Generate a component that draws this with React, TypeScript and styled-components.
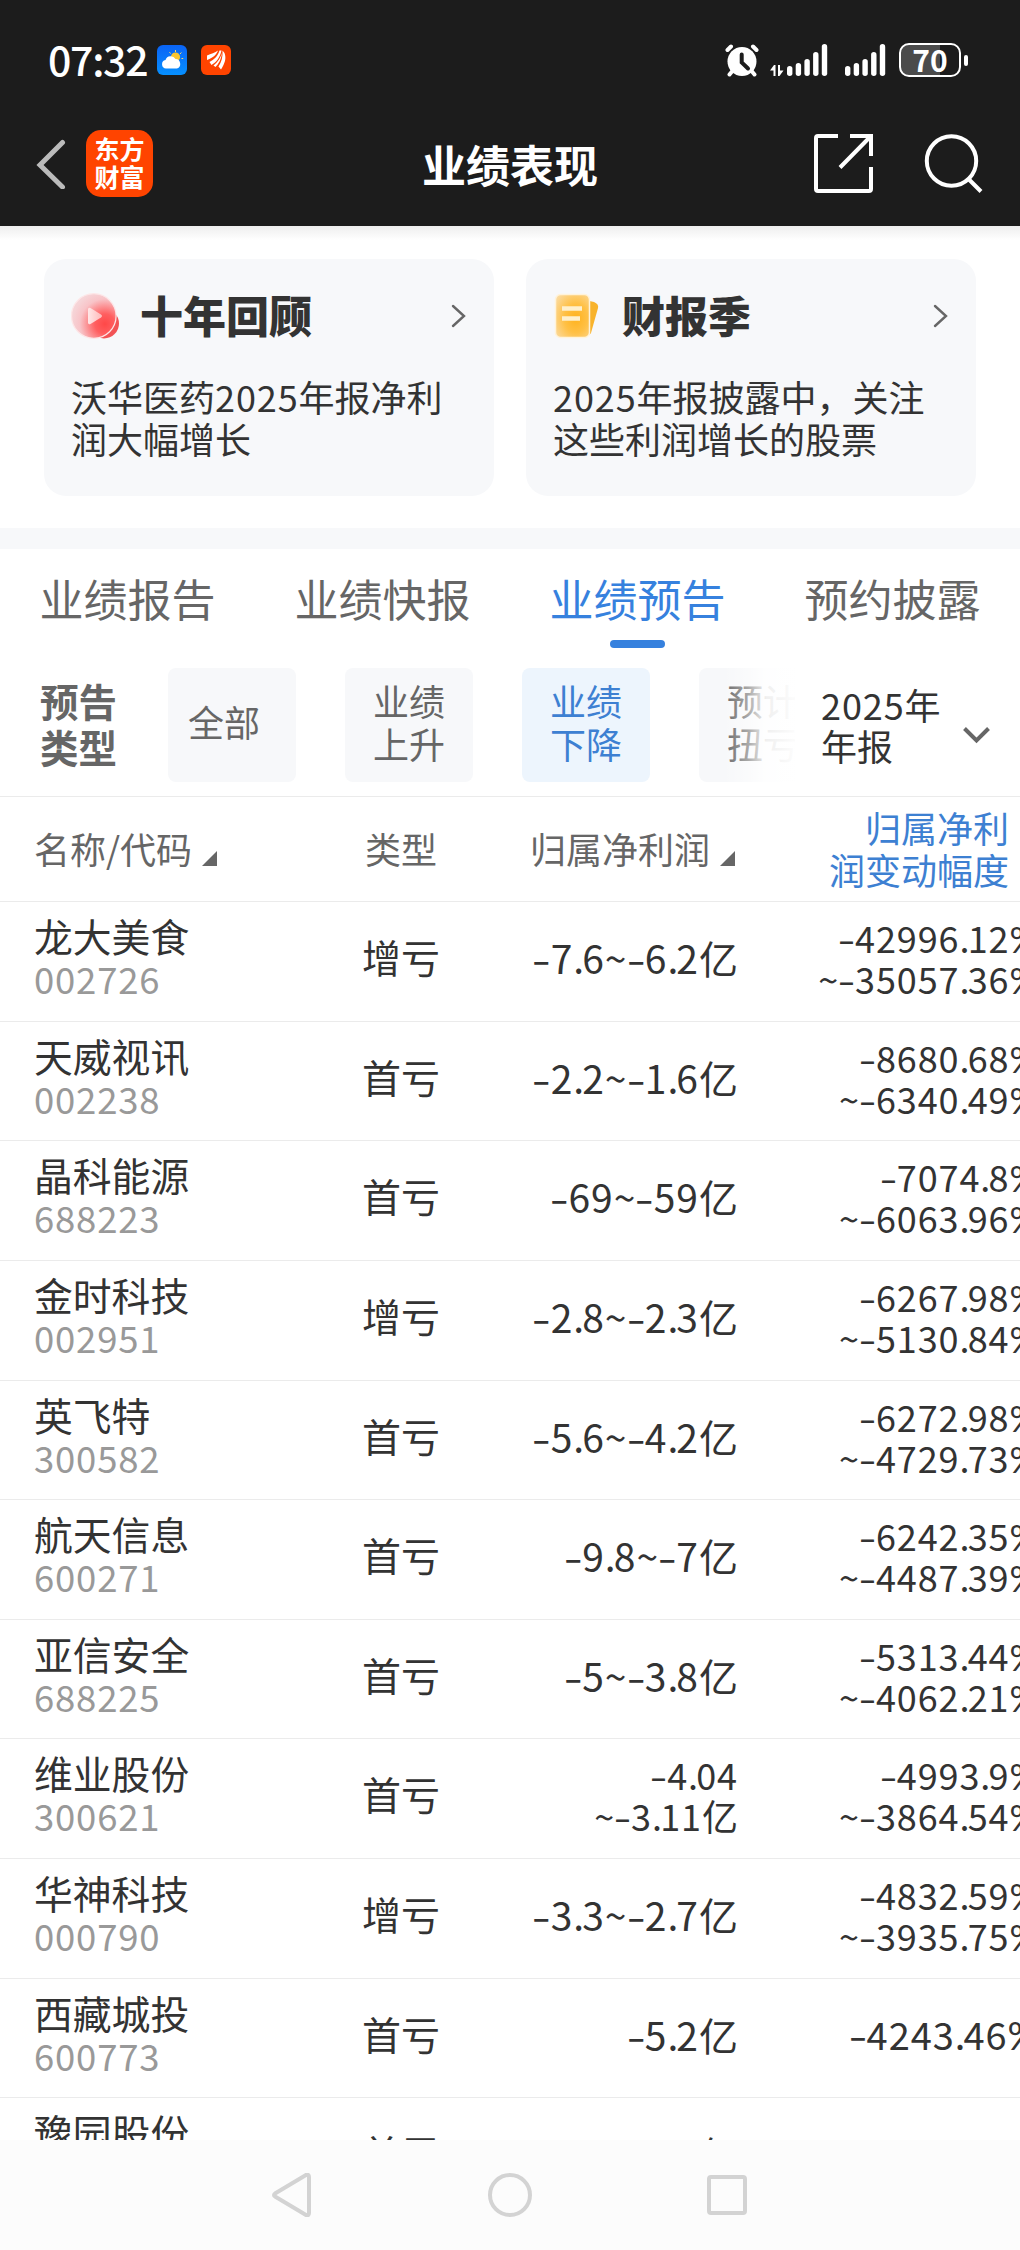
import React from "react";
import styled, { createGlobalStyle } from "styled-components";

const Global = createGlobalStyle`
  * { box-sizing: border-box; }
  body {
    margin: 0;
    background: #fff;
    font-family: "Noto Sans CJK SC", sans-serif;
    color: #333;
  }
`;

const Screen = styled.div`
  width: 1020px;
  height: 2250px;
  display: flex;
  flex-direction: column;
  overflow: hidden;
  background: #fff;
`;

/* ---------- status bar and title bar ---------- */

const Top = styled.header`
  flex: none;
  height: 226px;
  background: #1c1c1c;
  color: #fff;
`;

const StatusBar = styled.div`
  display: flex;
  align-items: center;
  height: 120px;
  padding: 0 52px 0 48px;
`;

const Clock = styled.span`
  width: 109px;
  font-size: 41px;
  font-weight: 500;
  letter-spacing: -1.3px;
  line-height: 60px;
  padding-bottom: 4px;
  white-space: nowrap;
`;

const AppBadge = styled.svg`
  width: 30px;
  height: 30px;
  margin-right: 14px;
`;

const StatusIcons = styled.div`
  display: flex;
  align-items: center;
  margin-left: auto;
`;

const SignalGroup = styled.div`
  display: flex;
  gap: 17px;
  margin-left: 11px;
`;

const Battery = styled.div`
  display: flex;
  justify-content: center;
  width: 62px;
  height: 34px;
  margin: 0 3px 0 12px;
  border: 2px solid #fff;
  border-radius: 10px;
  background: linear-gradient(90deg, #4b4b4b 68%, #1c1c1c 68%);
  font-size: 30px;
  font-weight: 600;
  line-height: 28px;
`;

const BatteryTip = styled.span`
  width: 4px;
  height: 11px;
  border-radius: 2px;
  background: #fff;
`;

const TitleBar = styled.div`
  display: grid;
  grid-template-columns: 1fr auto 1fr;
  align-items: center;
  height: 87px;
  padding: 0 36px;
`;

const TitleSide = styled.div<{ $end?: boolean }>`
  display: flex;
  align-items: center;
  justify-content: ${(p) => (p.$end ? "flex-end" : "flex-start")};
  gap: ${(p) => (p.$end ? 50 : 20)}px;
`;

const Logo = styled.div`
  width: 67px;
  height: 67px;
  padding-top: 4px;
  border-radius: 15px;
  background: #ff4400;
  font-size: 25px;
  font-weight: 700;
  line-height: 28px;
  text-align: center;
`;

const Title = styled.h1`
  margin: 0;
  font-size: 44px;
  font-weight: 700;
  line-height: 60px;
`;

/* ---------- promo cards ---------- */

const Promos = styled.section`
  flex: none;
  display: grid;
  grid-template-columns: 450px 450px;
  gap: 32px;
  height: 302px;
  padding: 33px 44px 0;
  background: linear-gradient(#eeeeee, #fff 14px);
`;

const Card = styled.article`
  height: 237px;
  padding: 28px 28px 28px 27px;
  border-radius: 22px;
  background: #f7f8fa;
`;

const CardHead = styled.div`
  display: flex;
  align-items: center;
  height: 58px;
`;

const CardTitle = styled.h2`
  flex: 1;
  margin: 0 0 4px 20px;
  font-size: 43px;
  font-weight: 900;
  line-height: 54px;
`;

const CardText = styled.p`
  margin: 30px 0 0;
  font-size: 36px;
  line-height: 42px;
  white-space: nowrap;
`;

const Divider = styled.div`
  flex: none;
  height: 21px;
  background: #f7f8fa;
`;

/* ---------- tabs ---------- */

const Tabs = styled.nav`
  flex: none;
  display: grid;
  grid-template-columns: repeat(4, 1fr);
  height: 119px;
`;

const Tab = styled.div<{ $active?: boolean }>`
  display: flex;
  flex-direction: column;
  align-items: center;
  padding-top: 18px;
  font-size: 44px;
  line-height: 62px;
  color: ${(p) => (p.$active ? "#3681de" : "#666")};

  &::after {
    content: "";
    width: 55px;
    height: 8px;
    margin-top: 11px;
    border-radius: 4px;
    background: ${(p) => (p.$active ? "#3681de" : "transparent")};
  }
`;

/* ---------- filters ---------- */

const Filters = styled.section`
  flex: none;
  display: flex;
  height: 129px;
  padding-left: 40px;
  border-bottom: 1px solid #ebebeb;
`;

const FilterLabel = styled.div`
  width: 128px;
  padding-top: 9px;
  font-size: 38.5px;
  font-weight: 700;
  line-height: 46px;
  color: #666;
`;

const Chips = styled.div`
  position: relative;
  display: flex;
  gap: 49px;
  width: 627px;
  height: 114px;
  overflow: hidden;

  &::after {
    content: "";
    position: absolute;
    inset: 0 0 0 auto;
    width: 72px;
    background: linear-gradient(90deg, #fff0, #ffffff70 35%, #ffffffe6 60%, #fffffffa);
  }
`;

const Chip = styled.div<{ $active?: boolean; $single?: boolean }>`
  flex: none;
  width: 128px;
  height: 114px;
  padding: ${(p) => (p.$single ? "32px 0 0 20px" : "11px 0 0")};
  border-radius: 8px;
  background: ${(p) => (p.$active ? "#edf5fd" : "#f7f8fa")};
  color: ${(p) => (p.$active ? "#3d80d2" : "#666")};
  font-size: 36px;
  line-height: 43px;
  text-align: ${(p) => (p.$single ? "left" : "center")};
`;

const Period = styled.div`
  display: flex;
  padding: 16px 0 0 26px;
  font-size: 36px;
  line-height: 41px;
`;

const PeriodText = styled.span`
  width: 142px;
`;

/* ---------- table ---------- */

const columns = "340px 122px 276px 306px";

const Table = styled.section`
  flex: 1;
  min-height: 0;
  overflow: hidden;
`;

const HeadRow = styled.div`
  display: grid;
  grid-template-columns: ${columns};
  align-items: center;
  height: 105px;
  padding-bottom: 2px;
  border-bottom: 1px solid #ebebeb;
  color: #666;
  font-size: 36px;
  line-height: 42px;
`;

const HeadCell = styled.div<{ $align?: "center" | "right" }>`
  display: flex;
  justify-content: ${(p) =>
    p.$align === "center" ? "center" : p.$align === "right" ? "flex-end" : "flex-start"};
  padding: ${(p) => (p.$align === "right" ? "0 3px 0 0" : p.$align ? "0" : "0 0 0 34px")};
`;

const SortMark = styled.svg`
  width: 15px;
  height: 15px;
  margin: 24px 0 0 10px;
`;

const ActiveHead = styled.div`
  padding-right: 35px;
  color: #3d80d2;
  text-align: right;
`;

const Row = styled.div`
  display: grid;
  grid-template-columns: ${columns};
  height: 119.65px;
  border-bottom: 1px solid #ebebeb;
`;

const NameCell = styled.div`
  padding: 11px 0 0 34px;
`;

const Name = styled.div`
  font-size: 38.8px;
  line-height: 44px;
`;

const Code = styled.div`
  font-size: 36.5px;
  line-height: 44px;
  letter-spacing: 0.8px;
  color: #999;
`;

const TypeCell = styled.div`
  padding-top: 27px;
  font-size: 39px;
  line-height: 54px;
  text-align: center;
`;

const ValueCell = styled.div<{ $lines: number; $size?: number }>`
  display: flex;
  flex-direction: column;
  align-items: flex-end;
  padding-top: ${(p) => (p.$lines > 1 ? 15 : 28)}px;
  font-size: ${(p) => (p.$lines > 1 ? 36 : p.$size ?? 39)}px;
  line-height: ${(p) => (p.$lines > 1 ? 41 : 54)}px;
  white-space: nowrap;
`;

const Digits = styled.span`
  letter-spacing: 0.025em;
`;

const Dot = styled.span`
  letter-spacing: -0.05em;
`;

const Dash = styled.span`
  display: inline-block;
  width: 0.47em;
  text-align: center;
  transform: scaleX(1.4);
`;

const Percent = styled.span`
  display: inline-block;
  width: 0.96em;
  font-family: Lato, "Noto Sans CJK SC", sans-serif;
  line-height: 1;
`;

/* ---------- system navigation ---------- */

const SystemNav = styled.footer`
  flex: none;
  display: flex;
  justify-content: center;
  align-items: center;
  gap: 173px;
  height: 110px;
  background: #fcfcfc;
`;

const NavIcon = styled.svg`
  width: 44px;
  height: 44px;
  fill: none;
  stroke: #d3d3d3;
  stroke-width: 4;
  stroke-linejoin: round;
`;

type Stock = { name: string; code: string; type: string; profit: string[]; change: string[] };

const stocks: Stock[] = [
  { name: "龙大美食", code: "002726", type: "增亏", profit: ["-7.6~-6.2亿"], change: ["-42996.12%", "~-35057.36%"] },
  { name: "天威视讯", code: "002238", type: "首亏", profit: ["-2.2~-1.6亿"], change: ["-8680.68%", "~-6340.49%"] },
  { name: "晶科能源", code: "688223", type: "首亏", profit: ["-69~-59亿"], change: ["-7074.8%", "~-6063.96%"] },
  { name: "金时科技", code: "002951", type: "增亏", profit: ["-2.8~-2.3亿"], change: ["-6267.98%", "~-5130.84%"] },
  { name: "英飞特", code: "300582", type: "首亏", profit: ["-5.6~-4.2亿"], change: ["-6272.98%", "~-4729.73%"] },
  { name: "航天信息", code: "600271", type: "首亏", profit: ["-9.8~-7亿"], change: ["-6242.35%", "~-4487.39%"] },
  { name: "亚信安全", code: "688225", type: "首亏", profit: ["-5~-3.8亿"], change: ["-5313.44%", "~-4062.21%"] },
  { name: "维业股份", code: "300621", type: "首亏", profit: ["-4.04", "~-3.11亿"], change: ["-4993.9%", "~-3864.54%"] },
  { name: "华神科技", code: "000790", type: "增亏", profit: ["-3.3~-2.7亿"], change: ["-4832.59%", "~-3935.75%"] },
  { name: "西藏城投", code: "600773", type: "首亏", profit: ["-5.2亿"], change: ["-4243.46%"] },
  { name: "豫园股份", code: "600655", type: "首亏", profit: ["-48亿"], change: ["-3926.1%"] },
];

function Amount({ text }: { text: string }) {
  const parts = text.split(/([-.%]|\d+)/).filter(Boolean);
  return (
    <div>
      {parts.map((part, i) => {
        if (part === "-") return <Dash key={i}>-</Dash>;
        if (part === ".") return <Dot key={i}>.</Dot>;
        if (part === "%") return <Percent key={i}>%</Percent>;
        return /\d/.test(part) ? <Digits key={i}>{part}</Digits> : part;
      })}
    </div>
  );
}

function Sort() {
  return (
    <SortMark viewBox="0 0 15 15">
      <path d="M15 0V15H0Z" fill="#666" />
    </SortMark>
  );
}

function WeatherBadge() {
  return (
    <AppBadge viewBox="0 0 30 30">
      <defs>
        <linearGradient id="sky" x2="0" y2="1">
          <stop stopColor="#0a63f5" />
          <stop offset="1" stopColor="#0690ff" />
        </linearGradient>
      </defs>
      <rect width="30" height="30" rx="6" fill="url(#sky)" />
      <path d="M18.5 7V5M13.5 8.5l-1-1.3M23 9l1.4-1.5M24.5 13.5h1.7" stroke="#f7d76a" strokeWidth="1" />
      <circle cx="18.5" cy="12" r="4.6" fill="#fcc62d" />
      <path d="M9 23.5a4.3 4.3 0 0 1-.5-8.5a5.5 5.5 0 0 1 10-1a4.9 4.9 0 0 1 1.5 9.5Z" fill="#fff" />
    </AppBadge>
  );
}

function BrandBadge() {
  return (
    <AppBadge viewBox="0 0 30 30">
      <rect width="30" height="30" rx="6" fill="#ff4400" />
      <path d="M6 10.5C10 9 14 7.5 17 5.5C15.5 10 11.5 13 6 15Z" fill="#fff" />
      <path d="M18.5 5.5L20.5 5.5C19 12.5 15.5 17 10.5 20L8.5 17C13 14.5 17 11 18.5 5.5Z" fill="#fff" />
      <path d="M21.5 5.5L23.5 8C25.5 13.5 24 18 20 24.5L17.5 21.5C20.5 17 22 12 21.5 5.5Z" fill="#fff" />
      <path d="M20.8 8C20.5 14 17.5 19 14.5 22L12.5 20.5C17 17 19.5 13 20.8 8Z" fill="#fff" />
    </AppBadge>
  );
}

function AlarmIcon() {
  return (
    <svg width="34" height="34" viewBox="0 0 34 34" fill="none" strokeLinecap="round">
      <circle cx="17" cy="18.5" r="14.5" fill="#fff" />
      <path d="M2.5 7L6 3.5M31.5 7L28 3.5M7 28.5L4.5 31.5M27 28.5L29.5 31.5" stroke="#fff" strokeWidth="4" />
      <path d="M16.7 11.5V19.5L23 25.5" stroke="#1c1c1c" strokeWidth="4" />
    </svg>
  );
}

function Signal({ data }: { data?: boolean }) {
  const heights = [10, 13, 17, 24, 32];
  return (
    <svg width={data ? 58 : 42} height="34" viewBox={data ? "-17 0 58 34" : "0 0 42 34"}>
      {heights.map((h, i) => (
        <rect key={h} x={i * 8.7} y={33 - h} width="5.4" height={h} rx="2.7" fill="#fff" />
      ))}
      {data && (
        <path d="M-17 27.5L-13 22H-11.5V33H-13.5V27.5ZM-9 22H-7V27.5H-3.500L-7.5 33H-9Z" fill="#fff" />
      )}
    </svg>
  );
}

function PlayIcon() {
  return (
    <svg width="49" height="47" viewBox="0 0 49 47">
      <defs>
        <radialGradient id="disc" cx="0.75" cy="0.68" r="0.75">
          <stop stopColor="#ff4848" />
          <stop offset="0.3" stopColor="#ff5f60" />
          <stop offset="0.75" stopColor="#f8c4c8" />
          <stop offset="1" stopColor="#f6d4d7" />
        </radialGradient>
        <linearGradient id="play">
          <stop stopColor="#ffe8e8" />
          <stop offset="1" stopColor="#ffb9b9" />
        </linearGradient>
      </defs>
      <circle cx="33" cy="30.5" r="15" fill="#f25355" />
      <circle cx="22.8" cy="23" r="22.3" fill="url(#disc)" stroke="#fde6e7" strokeWidth="1.2" />
      <path d="M17 16.5Q17 14 19.5 15L30 21.5Q32 23 30 24.5L19.5 31Q17 32 17 29.5Z" fill="url(#play)" />
    </svg>
  );
}

function ReportIcon() {
  return (
    <svg width="49" height="47" viewBox="0 0 49 47">
      <defs>
        <radialGradient id="sheet" cx="0.6" cy="0.55" r="0.75">
          <stop stopColor="#ffb21d" />
          <stop offset="0.45" stopColor="#ffc044" />
          <stop offset="1" stopColor="#fbdca4" />
        </radialGradient>
      </defs>
      <path d="M32 7L41 9Q46 11 45 15L38 40Q36 43 32 43Z" fill="#f8b32c" />
      <rect x="2.5" y="1.5" width="34" height="43" rx="5" fill="url(#sheet)" stroke="#fff3da" strokeWidth="1.5" />
      <path d="M9 15.5H29M9 25.5H27" stroke="#fff0cc" strokeWidth="4.5" />
    </svg>
  );
}

function CardArrow() {
  return (
    <svg width="15" height="24" viewBox="0 0 15 24" fill="none" stroke="#666" strokeWidth="2.4" strokeLinecap="round">
      <path d="M2 2L13 12L2 22" />
    </svg>
  );
}

export default function App() {
  return (
    <Screen>
      <Global />
      <Top>
        <StatusBar>
          <Clock>07:32</Clock>
          <WeatherBadge />
          <BrandBadge />
          <StatusIcons>
            <AlarmIcon />
            <SignalGroup>
              <Signal data />
              <Signal />
            </SignalGroup>
            <Battery>70</Battery>
            <BatteryTip />
          </StatusIcons>
        </StatusBar>
        <TitleBar>
          <TitleSide>
            <svg width="30" height="50" viewBox="0 0 30 50" fill="none" stroke="#bbb" strokeWidth="5" strokeLinecap="round">
              <path d="M26.5 3.5L4 26L26.5 48" />
            </svg>
            <Logo>
              东方
              <br />
              财富
            </Logo>
          </TitleSide>
          <Title>业绩表现</Title>
          <TitleSide $end>
            <svg width="59" height="59" viewBox="0 0 59 59" fill="none" stroke="#fff" strokeWidth="4">
              <path d="M24 2H4Q2 2 2 4V55Q2 57 4 57H55Q57 57 57 55V33M36 2H57V22M56 3L26 33.5" />
            </svg>
            <svg width="61" height="59" viewBox="0 0 61 59" fill="none" stroke="#fff" strokeWidth="4">
              <circle cx="28.5" cy="27" r="24.7" />
              <path d="M45.5 45L58 57.5" />
            </svg>
          </TitleSide>
        </TitleBar>
      </Top>

      <Promos>
        <Card>
          <CardHead>
            <PlayIcon />
            <CardTitle>十年回顾</CardTitle>
            <CardArrow />
          </CardHead>
          <CardText>
            沃华医药<Digits>2025</Digits>年报净利
            <br />
            润大幅增长
          </CardText>
        </Card>
        <Card>
          <CardHead>
            <ReportIcon />
            <CardTitle>财报季</CardTitle>
            <CardArrow />
          </CardHead>
          <CardText>
            <Digits>2025</Digits>年报披露中，关注
            <br />
            这些利润增长的股票
          </CardText>
        </Card>
      </Promos>
      <Divider />

      <Tabs>
        <Tab>业绩报告</Tab>
        <Tab>业绩快报</Tab>
        <Tab $active>业绩预告</Tab>
        <Tab>预约披露</Tab>
      </Tabs>

      <Filters>
        <FilterLabel>
          预告
          <br />
          类型
        </FilterLabel>
        <Chips>
          <Chip $single>全部</Chip>
          <Chip>
            业绩
            <br />
            上升
          </Chip>
          <Chip $active>
            业绩
            <br />
            下降
          </Chip>
          <Chip>
            预计
            <br />
            扭亏
          </Chip>
        </Chips>
        <Period>
          <PeriodText>
            <Digits>2025</Digits>年
            <br />
            年报
          </PeriodText>
          <svg width="27" height="61" viewBox="0 0 27 61" fill="none" stroke="#666" strokeWidth="4">
            <path d="M1.5 44.5L13.5 56.5L25.5 44.5" />
          </svg>
        </Period>
      </Filters>

      <Table>
        <HeadRow>
          <HeadCell>
            名称/代码
            <Sort />
          </HeadCell>
          <HeadCell $align="center">类型</HeadCell>
          <HeadCell $align="right">
            归属净利润
            <Sort />
          </HeadCell>
          <ActiveHead>
            归属净利
            <br />
            润变动幅度
          </ActiveHead>
        </HeadRow>
        {stocks.map((s) => (
          <Row key={s.code}>
            <NameCell>
              <Name>{s.name}</Name>
              <Code>{s.code}</Code>
            </NameCell>
            <TypeCell>{s.type}</TypeCell>
            <ValueCell $lines={s.profit.length}>
              {s.profit.map((t) => (
                <Amount key={t} text={t} />
              ))}
            </ValueCell>
            <ValueCell $lines={s.change.length} $size={38}>
              {s.change.map((t) => (
                <Amount key={t} text={t} />
              ))}
            </ValueCell>
          </Row>
        ))}
      </Table>

      <SystemNav>
        <NavIcon viewBox="0 0 44 44">
          <path d="M4 20.5Q2 22 4 23.5L35 42Q38 43 38 40V4Q38 1 35 2Z" />
        </NavIcon>
        <NavIcon viewBox="0 0 44 44">
          <circle cx="22" cy="22" r="20" />
        </NavIcon>
        <NavIcon viewBox="0 0 44 44">
          <rect x="4" y="4" width="36" height="36" rx="2" />
        </NavIcon>
      </SystemNav>
    </Screen>
  );
}
